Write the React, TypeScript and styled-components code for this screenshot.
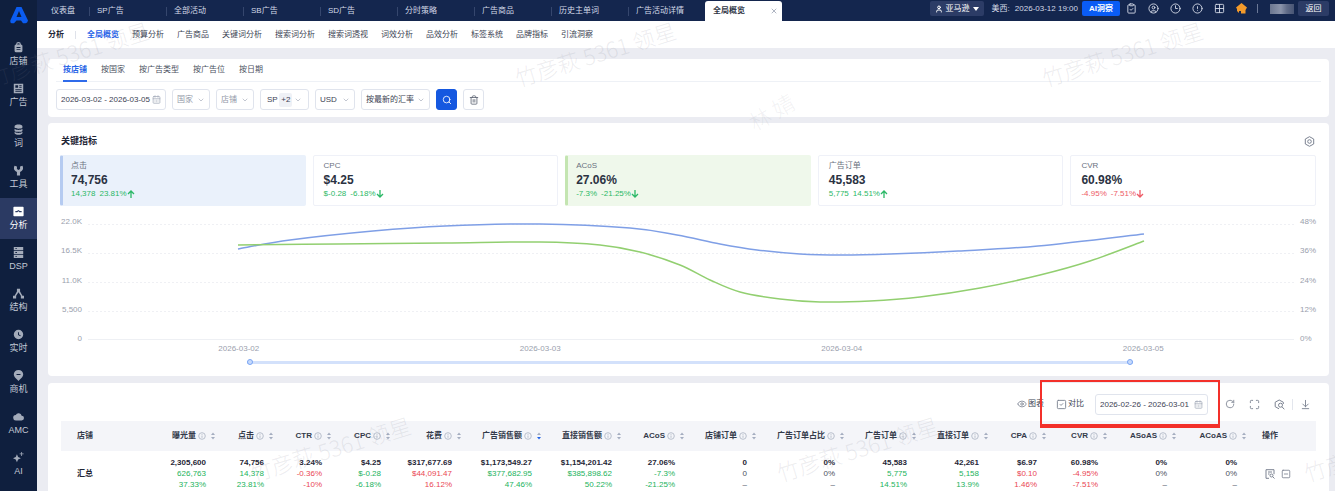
import React from 'react';
import styled, { createGlobalStyle, css } from 'styled-components';
import {
  ArrowDownToLine,
  CalendarDays,
  ChevronDown,
  CircleAlert,
  CircleUser,
  ClipboardCheck,
  Clock3,
  Eye,
  Grid2x2,
  Maximize,
  RotateCw,
  Search,
  SquareCheck,
  SquareMinus,
  Trash2,
  User,
  X,
} from 'lucide-react';

const GlobalStyle = createGlobalStyle`
  * { box-sizing: border-box; }
  body {
    margin: 0;
    background: #ebecf2;
    font: 8px/12px "Liberation Sans", "Noto Sans CJK SC", sans-serif;
    color: #3c4353;
  }
  button, input, select { font: inherit; color: inherit; margin: 0; }
  button { cursor: pointer; }
  a { color: inherit; text-decoration: none; }
`;

const Shell = styled.div`
  position: relative;
  display: flex;
  height: 100vh;
  overflow: hidden;
`;

/* ---------- sidebar ---------- */

const Sidebar = styled.nav`
  flex: 0 0 37px;
  background: #0f1f3e;
  display: flex;
  flex-direction: column;
`;

const Logo = styled.div`
  flex: 0 0 34px;
  display: flex;
  justify-content: center;
  padding-top: 7px;
`;

const SideItem = styled.a<{ $active?: boolean }>`
  flex: 0 0 41px;
  display: flex;
  flex-direction: column;
  align-items: center;
  padding-top: 8px;
  gap: 1px;
  font-size: 9px;
  line-height: 14px;
  color: ${(p) => (p.$active ? '#ffffff' : '#c3c9d5')};
  background: ${(p) => (p.$active ? '#2b3a63' : 'transparent')};
  svg { flex: none; color: ${(p) => (p.$active ? '#ffffff' : '#a3abba')}; }
`;

const sideItems: { label: string; active?: boolean; icon: React.ReactNode }[] = [
  {
    label: '店铺',
    icon: <path fillRule="evenodd" d="M4 3a3 3 0 0 1 6 0l2 1.500V11a2 2 0 0 1-2 2H4a2 2 0 0 1-2-2V4.500zM5.300 3.200h3.400a1.700 1.700 0 0 0-3.400 0zM4.500 6.500v1h5v-1zM4.500 9v1h5V9z" />,
  },
  {
    label: '广告',
    icon: <path fillRule="evenodd" d="M1 1h12v12H1zM3 3v3h3.500V3zM8 3v1h3V3zM8 5v1h3V5zM3 7.500v1h8v-1zM3 10v1h8v-1z" />,
  },
  {
    label: '词',
    icon: <path d="M2 3c0-3 10-3 10 0v1.500c0 2-10 2-10 0zM2 6c2 2 8 2 10 0v2.500c0 2-10 2-10 0zM2 10c2 2 8 2 10 0v1.500c0 3-10 3-10 0z" />,
  },
  {
    label: '工具',
    icon: <path d="M2 1l3 1v3l2 1.500L9 5V2l3-1c2 4 0 6.500-3 8v4.500H5V9C2 7.500 0 5 2 1z" />,
  },
  {
    label: '分析',
    active: true,
    icon: <path fillRule="evenodd" d="M1.500 1h11q1 0 1 1v10q0 1-1 1h-11q-1 0-1-1V2q0-1 1-1zM3 7.800h2.500l1.500-1 1 1h3V6.500H8.700L7 5 5 6.500H3z" />,
  },
  {
    label: 'DSP',
    icon: <path fillRule="evenodd" d="M1 0h12v4H1zM1 5h12v4H1zM1 10h12v4H1zM3 1.500v1h2v-1zM3 6.500v1h2v-1zM3 11.500v1h2v-1z" />,
  },
  {
    label: '结构',
    icon: <path d="M5 1h4v3.500l3 5.500h2v3.500h-4V10L7 5.500 4 10v3.500H0V10h2l3-5.500z" />,
  },
  {
    label: '实时',
    icon: <path fillRule="evenodd" d="M7 1a6 6 0 1 1 0 12A6 6 0 0 1 7 1zM6.400 4v3.700l3 1.500.5-1L7.600 7V4z" />,
  },
  {
    label: '商机',
    icon: <path fillRule="evenodd" d="M7 0c3.500 0 6 2.500 6 5.500C13 9 9 12 7 14 5 12 1 9 1 5.500 1 2.500 3.500 0 7 0zM4.500 5v1.500h5V5z" />,
  },
  {
    label: 'AMC',
    icon: <path d="M4 12a3.500 3.500 0 0 1-.5-7A4 4 0 0 1 11 6a3 3 0 0 1 0 6z" />,
  },
  {
    label: 'AI',
    icon: <path d="M5 3l1.500 3.500L10 8 6.500 9.500 5 13 3.500 9.500 0 8l3.500-1.500zM10.500 0h1v2h2v1h-2v2h-1V3h-2V2h2z" />,
  },
];

/* ---------- top bar ---------- */

const Main = styled.div`
  flex: 1;
  min-width: 0;
  display: flex;
  flex-direction: column;
`;

const TopBar = styled.header`
  flex: 0 0 21px;
  display: flex;
  align-items: flex-start;
  justify-content: space-between;
  padding: 1px 6px 0 0;
  background: #14264e;
  color: #d3d9e6;
`;

const TabList = styled.div`
  display: flex;
  flex: 0 1 746px;
  min-width: 0;
`;

const TopTab = styled.a<{ $active?: boolean; $first?: boolean }>`
  flex: ${(p) => (p.$first ? '0 1 52px' : '0 1 77px')};
  min-width: 0;
  white-space: nowrap;
  display: flex;
  align-items: center;
  justify-content: space-between;
  height: 20px;
  padding: 0 4px 0 ${(p) => (p.$first ? '14px' : '8px')};
  ${(p) =>
    p.$active &&
    css`
      background: #ffffff;
      color: #2f3646;
      border-radius: 3px 3px 0 0;
      font-weight: bold;
    `}
`;

const TabSeparator = styled.i`
  flex: none;
  width: 1px;
  height: 9px;
  margin-right: -5px;
  background: #35466d;
`;

const TopTools = styled.div`
  display: flex;
  align-items: center;
  height: 15px;
  white-space: nowrap;
`;

const TopButton = styled.button<{ $primary?: boolean; $width: number }>`
  width: ${(p) => p.$width}px;
  height: 15px;
  padding: 0;
  border: 0;
  border-radius: 2px;
  display: flex;
  align-items: center;
  justify-content: center;
  gap: 3px;
  color: #ffffff;
  background: ${(p) => (p.$primary ? '#0a5cf5' : '#2c3c66')};
  font-weight: ${(p) => (p.$primary ? 'bold' : 'normal')};
`;

const Clock = styled.span`
  display: flex;
  gap: 5px;
  margin: 0 4px 0 8px;
`;

const TopIcon = styled.button`
  width: 22px;
  height: 15px;
  padding: 0;
  border: 0;
  background: none;
  display: flex;
  align-items: center;
  justify-content: center;
`;

const ToolSeparator = styled.i`
  width: 1px;
  height: 9px;
  margin: 0 12px 0 5px;
  background: #6b7897;
`;

const MaskedName = styled.span`
  width: 24px;
  height: 10px;
  margin-right: 4px;
  background: linear-gradient(90deg, #6b7690, #8b94aa 45%, #616c88 70%, #475474);
`;

/* ---------- section menu ---------- */

const SectionMenu = styled.nav`
  flex: 0 0 27px;
  display: flex;
  align-items: center;
  gap: 13px;
  padding: 0 11px;
  background: #ffffff;
  white-space: nowrap;
`;

const SectionTitle = styled.strong`
  padding-right: 11px;
  margin-right: -2px;
  line-height: 8px;
  border-right: 1px solid #dfe2ea;
  color: #1f2636;
`;

const SectionLink = styled.a<{ $active?: boolean }>`
  color: ${(p) => (p.$active ? '#1f62e8' : '#3c4353')};
  font-weight: ${(p) => (p.$active ? 'bold' : 'normal')};
`;

/* ---------- cards ---------- */

const Content = styled.main`
  flex: 1;
  min-height: 0;
  padding: 11px 6px 0 11px;
  display: flex;
  flex-direction: column;
  overflow: hidden;
`;

const Card = styled.section<{ $pad: string; $gap?: number }>`
  flex: none;
  padding: ${(p) => p.$pad};
  margin-bottom: ${(p) => p.$gap ?? 0}px;
  border-radius: 4px;
  background: #ffffff;
`;

const FilterTabs = styled.div`
  display: flex;
  gap: 14px;
  height: 23px;
  padding: 0 7px;
  border-bottom: 1px solid #eef1f6;
`;

const FilterTab = styled.button<{ $active?: boolean }>`
  height: 23px;
  padding: 0;
  border: 0;
  border-bottom: 2px solid ${(p) => (p.$active ? '#2f6bea' : 'transparent')};
  background: none;
  color: ${(p) => (p.$active ? '#2463e6' : '#4a5060')};
  font-weight: ${(p) => (p.$active ? 'bold' : 'normal')};
`;

const Filters = styled.form`
  display: flex;
  gap: 6px;
  padding-top: 7px;
`;

const Field = styled.label<{ $width: number; $muted?: boolean }>`
  display: flex;
  align-items: center;
  gap: 1px;
  width: ${(p) => p.$width}px;
  height: 21px;
  padding: 0 4px;
  border: 1px solid #e0e4ed;
  border-radius: 3px;
  background: #ffffff;
  color: ${(p) => (p.$muted ? '#9299a8' : '#3c4353')};
  svg { flex: none; color: #a4abb9; pointer-events: none; }
`;

const TextInput = styled.input`
  flex: 1;
  min-width: 0;
  height: 16px;
  padding: 0;
  border: 0;
  outline: 0;
  background: none;
`;

const Select = styled.select`
  flex: 1;
  min-width: 0;
  height: 16px;
  padding: 0;
  border: 0;
  outline: 0;
  appearance: none;
  background: none;
`;

const MultiSelect = styled.button`
  display: flex;
  align-items: center;
  justify-content: space-between;
  width: 49px;
  height: 21px;
  padding: 0 6px;
  border: 1px solid #e0e4ed;
  border-radius: 3px;
  background: #ffffff;
  svg { color: #a4abb9; }
`;

const CountTag = styled.span`
  padding: 1px 2px;
  border-radius: 2px;
  background: #eff1f6;
`;

const IconButton = styled.button<{ $primary?: boolean }>`
  width: 21px;
  height: 21px;
  padding: 0;
  border: 1px solid ${(p) => (p.$primary ? '#1558e0' : '#e0e4ed')};
  border-radius: 3px;
  display: flex;
  align-items: center;
  justify-content: center;
  background: ${(p) => (p.$primary ? '#1558e0' : '#ffffff')};
  color: ${(p) => (p.$primary ? '#ffffff' : '#5f6675')};
`;

/* ---------- metrics ---------- */

const CardHead = styled.div`
  display: flex;
  align-items: center;
  justify-content: space-between;
  height: 16px;
  padding: 0 1px;
  margin-bottom: 6px;
  h2 { margin: 0; font-size: 9px; line-height: 16px; color: #1f2636; }
`;

const PlainButton = styled.button<{ $dark?: boolean }>`
  display: flex;
  align-items: center;
  gap: 1px;
  padding: 0;
  border: 0;
  background: none;
  color: ${(p) => (p.$dark ? '#3c4353' : '#7c8392')};
  svg { color: #7c8392; }
`;

const Metrics = styled.div`
  display: grid;
  grid-template-columns: repeat(5, 1fr);
  gap: 7px;
`;

type Tone = 'blue' | 'green' | 'plain';
const metricTone: Record<Tone, ReturnType<typeof css>> = {
  blue: css`background: #eaf1fb; border-color: #eaf1fb; border-left: 3px solid #b5cbf1;`,
  green: css`background: #eff8eb; border-color: #eff8eb; border-left: 3px solid #c4e5b1;`,
  plain: css`background: #ffffff; padding-left: 10px;`,
};

const Metric = styled.article<{ $tone: Tone }>`
  height: 51px;
  padding: 4px 8px;
  border: 1px solid #eff1f8;
  border-radius: 2px;
  ${(p) => metricTone[p.$tone]}
`;

const MetricLabel = styled.div`
  color: #6a7180;
`;

const MetricValue = styled.div`
  font-size: 12px;
  line-height: 16px;
  font-weight: bold;
  color: #2b3242;
`;

const MetricDelta = styled.div<{ $down?: boolean }>`
  display: flex;
  align-items: center;
  line-height: 12px;
  color: ${(p) => (p.$down ? '#ee5b66' : '#2bb866')};
  span { margin-right: 4px; }
`;

/* ---------- chart ---------- */

const Chart = styled.div`
  display: grid;
  grid-template-columns: 22px 1fr 16px;
  grid-template-rows: 127px 10px 16px;
  column-gap: 6px;
  margin-top: 11px;
  color: #9aa0ad;
`;

const Axis = styled.div<{ $side: 'left' | 'right' }>`
  display: flex;
  flex-direction: column;
  justify-content: space-between;
  align-items: ${(p) => (p.$side === 'left' ? 'flex-end' : 'flex-start')};
  line-height: 10px;
`;

const Plot = styled.svg`
  display: block;
  width: 100%;
  height: 116px;
  margin-top: 7px;
  overflow: visible;
`;

const Dates = styled.div`
  grid-column: 2;
  display: grid;
  grid-template-columns: repeat(4, 1fr);
  text-align: center;
  line-height: 10px;
`;

const RangeRow = styled.div`
  grid-column: 2;
  display: flex;
  align-items: center;
  padding: 0 13%;
  margin: 0 4px 0 2px;
`;

const Range = styled.input`
  flex: 1;
  min-width: 0;
  height: 6px;
  margin: 0;
  appearance: none;
  background: linear-gradient(#d3e1fb, #d3e1fb) center / 100% 3px no-repeat;
  &::-webkit-slider-thumb {
    appearance: none;
    width: 6px;
    height: 6px;
    border: 1px solid #79a5f5;
    border-radius: 50%;
    background: #c7dafb;
  }
`;

type Point = [number, number];

const clicks: Point[] = [
  [150, 25], [202, 16], [285, 7], [357, 2], [452, 0], [542, 4], [589, 11],
  [632, 20], [669, 26], [712, 30], [754, 31], [802, 30], [870, 27], [950, 22], [1056, 10],
];
const acos: Point[] = [
  [150, 21], [250, 20], [357, 19], [452, 18], [512, 21], [552, 28], [592, 41],
  [622, 56], [652, 68], [692, 75], [732, 78], [782, 77], [832, 73], [892, 64], [952, 51], [1002, 37], [1056, 17],
];

function smoothPath(points: Point[]) {
  return points.slice(1).reduce((d, [x, y], i) => {
    const before = points[Math.max(i - 1, 0)];
    const from = points[i];
    const after = points[Math.min(i + 2, points.length - 1)];
    const c1 = [from[0] + (x - before[0]) / 6, from[1] + (y - before[1]) / 6];
    const c2 = [x - (after[0] - from[0]) / 6, y - (after[1] - from[1]) / 6];
    return `${d} C${c1} ${c2} ${x},${y}`;
  }, `M${points[0]}`);
}

/* ---------- table ---------- */

const Toolbar = styled.div`
  display: flex;
  align-items: center;
  justify-content: flex-end;
  height: 20px;
  margin-bottom: 7px;
  padding-right: 5px;
`;

const CompareGroup = styled.div`
  position: relative;
  display: flex;
  align-items: center;
  gap: 11px;
  margin: 0 17px 0 12px;
`;

const Highlight = styled.div`
  position: absolute;
  inset: -14px -12px -13px -16px;
  border: 2px solid #f3302a;
  border-bottom-width: 4px;
  pointer-events: none;
`;

const ToolbarIcons = styled.div`
  display: flex;
  align-items: center;
  gap: 14px;
`;

const DownloadSlot = styled.span`
  padding-left: 7px;
  margin-left: -7px;
  border-left: 1px solid #e3e6ed;
`;

const DataTable = styled.table`
  width: 100%;
  table-layout: fixed;
  border-collapse: collapse;
  white-space: nowrap;
`;

const HeadCell = styled.th<{ $text?: boolean }>`
  height: 30px;
  padding: 0 ${(p) => (p.$text ? '0 0 16px' : '2px 0 0')};
  background: #f4f5f9;
  color: #333a4a;
  text-align: left;
  font-weight: bold;
`;

const OpsHead = styled(HeadCell)`
  padding-left: 14px;
`;

const HeadLabel = styled.span`
  display: flex;
  align-items: center;
  justify-content: flex-end;
  gap: 2px;
  svg { flex: none; color: #b3bac8; }
`;

const Cell = styled.td<{ $text?: boolean }>`
  padding: ${(p) => (p.$text ? '6px 0 6px 16px' : '6px 11px 6px 0')};
  text-align: ${(p) => (p.$text ? 'left' : 'right')};
  line-height: 11px;
  border-bottom: 1px solid #eef0f5;
  color: #2b3242;
`;

const Line = styled.div<{ $tone?: string; $strong?: boolean }>`
  color: ${(p) => (p.$tone === 'up' ? '#22b35c' : p.$tone === 'down' ? '#ea4653' : '#4a5060')};
  ${(p) => p.$strong && 'color: #1f2636; font-weight: bold;'}
`;

const RowActions = styled.div`
  display: flex;
  gap: 6px;
  padding-left: 1px;
`;

type Column = { name: string; width: number; values: string[]; tone?: 'up' | 'down'; sorted?: boolean };

const columns: Column[] = [
  { name: '曝光量', width: 82, values: ['2,305,600', '626,763', '37.33%'], tone: 'up' },
  { name: '点击', width: 58, values: ['74,756', '14,378', '23.81%'], tone: 'up' },
  { name: 'CTR', width: 58, values: ['3.24%', '-0.36%', '-10%'], tone: 'down' },
  { name: 'CPC', width: 59, values: ['$4.25', '$-0.28', '-6.18%'], tone: 'up' },
  { name: '花费', width: 71, values: ['$317,677.69', '$44,091.47', '16.12%'], tone: 'down' },
  { name: '广告销售额', width: 80, values: ['$1,173,549.27', '$377,682.95', '47.46%'], tone: 'up', sorted: true },
  { name: '直接销售额', width: 80, values: ['$1,154,201.42', '$385,898.62', '50.22%'], tone: 'up' },
  { name: 'ACoS', width: 63, values: ['27.06%', '-7.3%', '-21.25%'], tone: 'up' },
  { name: '店铺订单', width: 72, values: ['0', '0', '–'] },
  { name: '广告订单占比', width: 88, values: ['0%', '0%', '–'] },
  { name: '广告订单', width: 72, values: ['45,583', '5,775', '14.51%'], tone: 'up' },
  { name: '直接订单', width: 72, values: ['42,261', '5,158', '13.9%'], tone: 'up' },
  { name: 'CPA', width: 58, values: ['$6.97', '$0.10', '1.46%'], tone: 'down' },
  { name: 'CVR', width: 61, values: ['60.98%', '-4.95%', '-7.51%'], tone: 'down' },
  { name: 'ASoAS', width: 69, values: ['0%', '0%', '–'] },
  { name: 'ACoAS', width: 70, values: ['0%', '0%', '–'] },
];

const metrics: { label: string; value: string; delta: string; rate: string; rising?: boolean; bad?: boolean; tone: Tone }[] = [
  { label: '点击', value: '74,756', delta: '14,378', rate: '23.81%', rising: true, tone: 'blue' },
  { label: 'CPC', value: '$4.25', delta: '$-0.28', rate: '-6.18%', tone: 'plain' },
  { label: 'ACoS', value: '27.06%', delta: '-7.3%', rate: '-21.25%', tone: 'green' },
  { label: '广告订单', value: '45,583', delta: '5,775', rate: '14.51%', rising: true, tone: 'plain' },
  { label: 'CVR', value: '60.98%', delta: '-4.95%', rate: '-7.51%', bad: true, tone: 'plain' },
];

/* ---------- watermark ---------- */

const Watermark = styled.div<{ $x: number; $y: number; $faint?: boolean }>`
  position: absolute;
  left: ${(p) => p.$x}px;
  top: ${(p) => p.$y}px;
  transform: translate(-50%, -50%) rotate(${(p) => (p.$faint ? -30 : -17)}deg);
  font-size: 22px;
  line-height: 26px;
  font-family: "Noto Sans CJK SC", sans-serif;
  font-weight: 300;
  white-space: nowrap;
  color: rgba(120, 126, 140, ${(p) => (p.$faint ? 0.1 : 0.14)});
  pointer-events: none;
`;

function Arrow({ up }: { up?: boolean }) {
  return (
    <svg width="8" height="8" viewBox="0 0 8 8" fill="none" stroke="currentColor" strokeWidth="1.300">
      <path d={up ? 'M4 8V1M1 4l3-3 3 3' : 'M4 0v7M1 4l3 3 3-3'} />
    </svg>
  );
}

function InfoAndSort({ sorted }: { sorted?: boolean }) {
  return (
    <svg width="17" height="10" viewBox="0 0 17 10" fill="none">
      <circle cx="4" cy="5" r="3.300" stroke="#b9c0cd" />
      <path d="M4 4.500v2.300M4 3v.8" stroke="#b9c0cd" />
      <path d="M13 4l2-2.500L17 4z" fill="#a4adc0" />
      <path d="M13 6l2 2.500L17 6z" fill={sorted ? '#1f62e8' : '#a4adc0'} />
    </svg>
  );
}

function HexSettings() {
  return (
    <svg width="11" height="11" viewBox="0 0 11 11" fill="none" stroke="currentColor">
      <path d="M5.500.7l4.200 2.300v5L5.500 10.300 1.300 8V3z" />
      <circle cx="5.500" cy="5.500" r="1.800" />
    </svg>
  );
}

function ColumnSettings() {
  return (
    <svg width="11" height="11" viewBox="0 0 11 11" fill="none" stroke="currentColor">
      <path d="M5 9.800 1.200 7.700V3.200L5.200 1l4.100 2.200V5" />
      <circle cx="6.500" cy="6.200" r="2" />
      <path d="M8 7.800l2.300 2.500" />
    </svg>
  );
}

function RowDetail() {
  return (
    <svg width="10" height="10" viewBox="0 0 10 10" fill="none" stroke="currentColor">
      <path d="M4 9.300H1V.7h8v4.500M3 3h4M3 5h1.500" />
      <circle cx="6.500" cy="6.500" r="1.500" />
      <path d="M7.600 7.600l1.900 1.900" />
    </svg>
  );
}

const topTabs = ['仪表盘', 'SP广告', '全部活动', 'SB广告', 'SD广告', '分时策略', '广告商品', '历史主单词', '广告活动详情'];
const sections = ['全局概览', '预算分析', '广告商品', '关键词分析', '搜索词分析', '搜索词透视', '词效分析', '品效分析', '标签系统', '品牌指标', '引流洞察'];
const filterTabs = ['按店铺', '按国家', '按广告类型', '按广告位', '按日期'];

export default function App() {
  return (
    <Shell>
      <GlobalStyle />
      <Sidebar>
        <Logo>
          <svg width="18" height="17" viewBox="0 0 18 17">
            <path
              fillRule="evenodd"
              d="M6.500 0h5L18 13.500Q17.500 16 15.500 16.300L13 16.200 11 13.500H6.500L4 16.200 1.500 16.300Q0 16 .3 13.500zM9 4 6.500 10h5z"
              fill="#0b5cf0"
            />
          </svg>
        </Logo>
        {sideItems.map((item) => (
          <SideItem key={item.label} href="#" $active={item.active}>
            <svg width="11" height="11" viewBox="0 0 14 14" fill="currentColor">{item.icon}</svg>
            {item.label}
          </SideItem>
        ))}
      </Sidebar>

      <Main>
        <TopBar>
          <TabList>
            {topTabs.map((tab, i) => (
              <TopTab key={tab} href="#" $first={i === 0}>
                {tab}
                {i < topTabs.length - 1 && <TabSeparator />}
              </TopTab>
            ))}
            <TopTab href="#" $active>
              全局概览
              <X size={8} color="#8790a3" />
            </TopTab>
          </TabList>
          <TopTools>
            <TopButton $width={54}>
              <User size={8} strokeWidth={3} />
              亚马逊
              <svg width="6" height="4" viewBox="0 0 6 4"><path d="M0 0h6L3 4z" fill="currentColor" /></svg>
            </TopButton>
            <Clock><span>美西:</span><span>2026-03-12 19:00</span></Clock>
            <TopButton $width={38} $primary>AI洞察</TopButton>
            <TopIcon aria-label="任务"><ClipboardCheck size={11} /></TopIcon>
            <TopIcon aria-label="客服"><CircleUser size={11} /></TopIcon>
            <TopIcon aria-label="历史"><Clock3 size={11} /></TopIcon>
            <TopIcon aria-label="帮助"><CircleAlert size={11} /></TopIcon>
            <TopIcon aria-label="应用"><Grid2x2 size={11} /></TopIcon>
            <TopIcon aria-label="主页">
              <svg width="11" height="11" viewBox="0 0 11 11">
                <path d="M5.500 0 11 4.500 9.500 7v3.500H5V8H3v2L1 8V6L0 4.500z" fill="#f39a2b" />
              </svg>
            </TopIcon>
            <ToolSeparator />
            <MaskedName />
            <TopButton $width={31}>返回</TopButton>
          </TopTools>
        </TopBar>

        <SectionMenu>
          <SectionTitle>分析</SectionTitle>
          {sections.map((name, i) => (
            <SectionLink key={name} href="#" $active={i === 0}>{name}</SectionLink>
          ))}
        </SectionMenu>

        <Content>
          <Card $pad="0 8px 7px" $gap={6}>
            <FilterTabs>
              {filterTabs.map((name, i) => (
                <FilterTab key={name} $active={i === 0}>{name}</FilterTab>
              ))}
            </FilterTabs>
            <Filters onSubmit={(e) => e.preventDefault()}>
              <Field $width={110}>
                <TextInput aria-label="日期" defaultValue="2026-03-02 - 2026-03-05" />
                <CalendarDays size={9} />
              </Field>
              <Field $width={38} $muted>
                <Select aria-label="国家"><option>国家</option></Select>
                <ChevronDown size={8} />
              </Field>
              <Field $width={38} $muted>
                <Select aria-label="店铺"><option>店铺</option></Select>
                <ChevronDown size={8} />
              </Field>
              <MultiSelect type="button">
                SP <CountTag>+2</CountTag>
                <ChevronDown size={8} />
              </MultiSelect>
              <Field $width={40}>
                <Select aria-label="币种"><option>USD</option></Select>
                <ChevronDown size={8} />
              </Field>
              <Field $width={69}>
                <Select aria-label="汇率"><option>按最新的汇率</option></Select>
                <ChevronDown size={8} />
              </Field>
              <IconButton $primary aria-label="搜索"><Search size={10} /></IconButton>
              <IconButton type="button" aria-label="清空"><Trash2 size={10} /></IconButton>
            </Filters>
          </Card>

          <Card $pad="10px 13px 6px 12px" $gap={7}>
            <CardHead>
              <h2>关键指标</h2>
              <PlainButton aria-label="设置"><HexSettings /></PlainButton>
            </CardHead>
            <Metrics>
              {metrics.map((m) => (
                <Metric key={m.label} $tone={m.tone}>
                  <MetricLabel>{m.label}</MetricLabel>
                  <MetricValue>{m.value}</MetricValue>
                  <MetricDelta $down={m.bad}>
                    <span>{m.delta}</span>
                    {m.rate}
                    <Arrow up={m.rising} />
                  </MetricDelta>
                </Metric>
              ))}
            </Metrics>
            <Chart>
              <Axis $side="left">
                {['22.0K', '16.5K', '11.0K', '5,500', '0'].map((t) => <span key={t}>{t}</span>)}
              </Axis>
              <Plot viewBox="0 0 1206 116" preserveAspectRatio="none" fill="none">
                {[0, 29, 58, 87].map((y) => (
                  <path key={y} d={`M0 ${y + 0.5}H1206`} stroke="#eff0f4" strokeDasharray="2 2" />
                ))}
                <path d="M0 115.500H1206" stroke="#eef0f4" />
                <path d={smoothPath(clicks)} stroke="#7f9fe6" strokeWidth="1.500" vectorEffect="non-scaling-stroke" />
                <path d={smoothPath(acos)} stroke="#92cf70" strokeWidth="1.500" vectorEffect="non-scaling-stroke" />
              </Plot>
              <Axis $side="right">
                {['48%', '36%', '24%', '12%', '0%'].map((t) => <span key={t}>{t}</span>)}
              </Axis>
              <Dates>
                {['2026-03-02', '2026-03-03', '2026-03-04', '2026-03-05'].map((t) => <span key={t}>{t}</span>)}
              </Dates>
              <RangeRow>
                <Range type="range" aria-label="开始日期" defaultValue={0} />
                <Range type="range" aria-label="结束日期" defaultValue={100} />
              </RangeRow>
            </Chart>
          </Card>

          <Card $pad="11px 13px 12px">
            <Toolbar>
              <PlainButton $dark><Eye size={10} />图表</PlainButton>
              <CompareGroup>
                <PlainButton $dark><SquareCheck size={11} />对比</PlainButton>
                <Field $width={113}>
                  <TextInput aria-label="对比日期" defaultValue="2026-02-26 - 2026-03-01" />
                  <CalendarDays size={9} />
                </Field>
                <Highlight />
              </CompareGroup>
              <ToolbarIcons>
                <PlainButton aria-label="刷新"><RotateCw size={10} /></PlainButton>
                <PlainButton aria-label="全屏"><Maximize size={11} /></PlainButton>
                <PlainButton aria-label="列设置"><ColumnSettings /></PlainButton>
                <DownloadSlot>
                  <PlainButton aria-label="下载"><ArrowDownToLine size={11} /></PlainButton>
                </DownloadSlot>
              </ToolbarIcons>
            </Toolbar>
            <DataTable>
              <colgroup>
                <col width={74} />
                {columns.map((c) => <col key={c.name} width={c.width} />)}
                <col width={68} />
              </colgroup>
              <thead>
                <tr>
                  <HeadCell $text>店铺</HeadCell>
                  {columns.map((c) => (
                    <HeadCell key={c.name}>
                      <HeadLabel>{c.name}<InfoAndSort sorted={c.sorted} /></HeadLabel>
                    </HeadCell>
                  ))}
                  <OpsHead $text>操作</OpsHead>
                </tr>
              </thead>
              <tbody>
                <tr>
                  <Cell $text><Line $strong>汇总</Line></Cell>
                  {columns.map((c) => (
                    <Cell key={c.name}>
                      <Line $strong>{c.values[0]}</Line>
                      <Line $tone={c.tone}>{c.values[1]}</Line>
                      <Line $tone={c.tone}>{c.values[2]}</Line>
                    </Cell>
                  ))}
                  <Cell $text>
                    <RowActions>
                      <PlainButton aria-label="详情"><RowDetail /></PlainButton>
                      <PlainButton aria-label="收起"><SquareMinus size={10} /></PlainButton>
                    </RowActions>
                  </Cell>
                </tr>
              </tbody>
            </DataTable>
          </Card>
        </Content>
      </Main>

      {[68, 595, 1122].map((x) => <Watermark key={x} $x={x} $y={53}>竹彦萩 5361 领星</Watermark>)}
      {[330, 857, 1384].map((x) => <Watermark key={x} $x={x} $y={448}>竹彦萩 5361 领星</Watermark>)}
      <Watermark $x={771} $y={111} $faint>林 婧</Watermark>
    </Shell>
  );
}
